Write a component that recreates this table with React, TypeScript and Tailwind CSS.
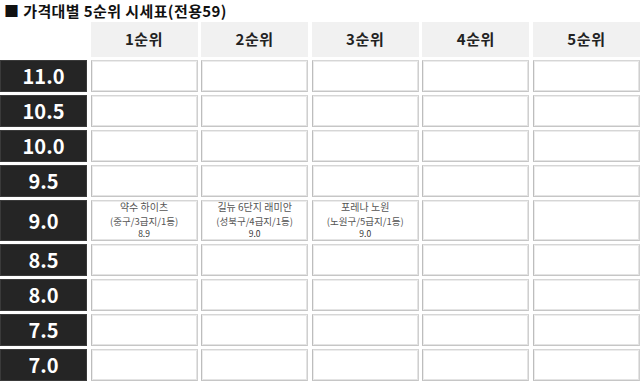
import React from "react";

type Entry = { name: string; info: string; price: string };

const rows: { label: string; tall?: boolean; cells: (Entry | null)[] }[] = [
  { label: "11.0", cells: [null, null, null, null, null] },
  { label: "10.5", cells: [null, null, null, null, null] },
  { label: "10.0", cells: [null, null, null, null, null] },
  { label: "9.5", cells: [null, null, null, null, null] },
  {
    label: "9.0",
    tall: true,
    cells: [
      { name: "약수 하이츠", info: "(중구/3급지/1등)", price: "8.9" },
      { name: "길뉴 6단지 래미안", info: "(성북구/4급지/1등)", price: "9.0" },
      { name: "포레나 노원", info: "(노원구/5급지/1등)", price: "9.0" },
      null,
      null,
    ],
  },
  { label: "8.5", cells: [null, null, null, null, null] },
  { label: "8.0", cells: [null, null, null, null, null] },
  { label: "7.5", cells: [null, null, null, null, null] },
  { label: "7.0", cells: [null, null, null, null, null] },
];

const headers = ["1순위", "2순위", "3순위", "4순위", "5순위"];

export default function App() {
  return (
    <div
      className="w-[640px] h-[381px] bg-white overflow-hidden"
      style={{ fontFamily: '"Noto Sans CJK KR", "Noto Sans", sans-serif' }}
    >
      <div className="h-[22px] pl-[4px] pt-[1px] text-[15px] tracking-[0.4px] font-bold leading-[19px] text-[#111]">
        ■ 가격대별 5순위 시세표(전용59)
      </div>
      <div className="grid grid-cols-[87px_repeat(5,minmax(0,1fr))] gap-x-[3.5px] gap-y-[3px]">
        <div className="h-[35px]" />
        {headers.map((h) => (
          <div
            key={h}
            className="h-[35px] bg-[#f1f1f1] flex items-center justify-center text-[15px] tracking-[0.6px] font-bold text-[#222]"
          >
            {h}
          </div>
        ))}
        {rows.map((r) => (
          <React.Fragment key={r.label}>
            <div
              className={`${r.tall ? "h-[41px]" : "h-[32px]"} bg-[#252525] border border-[#3a3a3a] flex items-center justify-center text-white text-[20px] font-bold leading-none`}
            >
              {r.label}
            </div>
            {r.cells.map((c, i) => (
              <div
                key={i}
                className={`${r.tall ? "h-[41px]" : "h-[32px]"} bg-white border border-t-[#d6d6d6] border-l-[#bdbdbd] border-r-[#cfcfcf] border-b-[#c6c6c6] shadow-[inset_1px_1px_0_#ececec,inset_-1px_-1px_0_#e4e4e4] flex flex-col items-center text-[#555]`}
              >
                {c && (
                  <>
                    <div className="text-[10px] leading-[12px] mt-[0px] h-[13px]">{c.name}</div>
                    <div className="text-[9.5px] leading-[12px] h-[14px] pt-[1px]">{c.info}</div>
                    <div className="text-[8.5px] leading-[10px] text-[#333]">{c.price}</div>
                  </>
                )}
              </div>
            ))}
          </React.Fragment>
        ))}
      </div>
    </div>
  );
}
